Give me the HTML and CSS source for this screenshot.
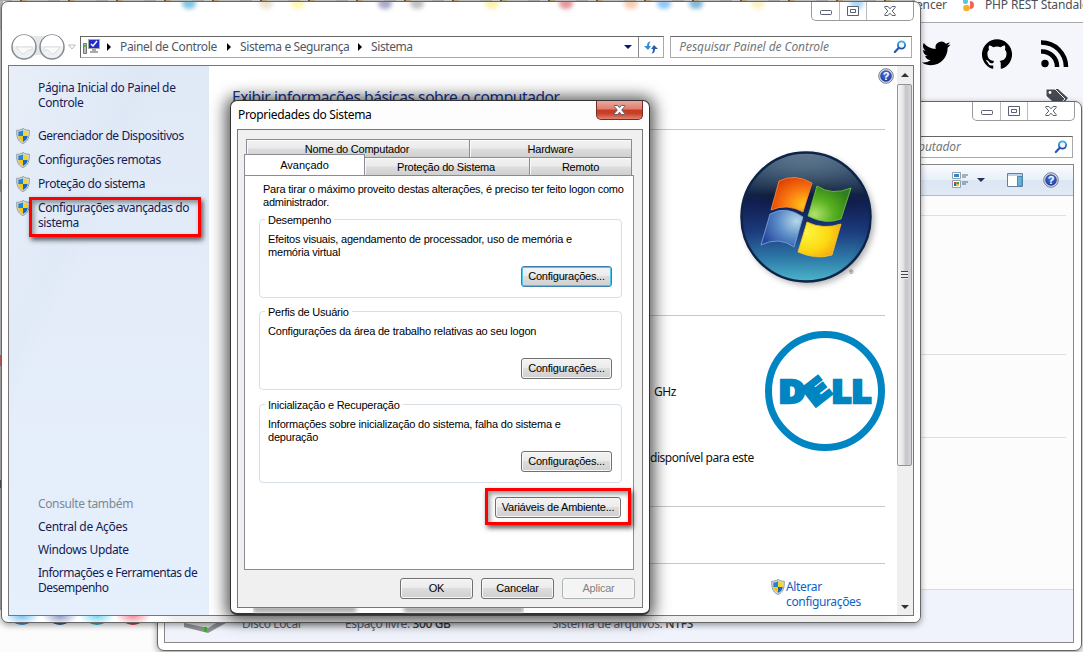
FILE: index.html
```html
<!DOCTYPE html>
<html lang="pt-BR">
<head>
<meta charset="utf-8">
<title>Propriedades do Sistema</title>
<link rel="stylesheet" href="styles.css">
</head>
<body>
<svg width="0" height="0" class="defs">
  <defs>
    <linearGradient id="lens" x1="0" y1="0" x2="0" y2="1"><stop offset="0" stop-color="#38b5e0"/><stop offset="1" stop-color="#1f4da8"/></linearGradient>
    <radialGradient id="helpfill" cx=".5" cy=".35" r=".7"><stop offset="0" stop-color="#4f7fe0"/><stop offset="1" stop-color="#14309a"/></radialGradient>
    <symbol id="shield" viewBox="0 0 14 16">
      <path d="M7 .5C5 1.8 3 2.3.7 2.3.5 8.500 1.500 13 7 15.600 12.500 13 13.500 8.500 13.300 2.300 11 2.300 9 1.800 7 .5z" fill="#d9dcdc" stroke="#8d9191" stroke-width=".9"/>
      <path d="M7 2.200C5.500 3 4 3.600 2.300 3.600V8H7z" fill="#2383d6"/><path d="M7 2.200C8.500 3 10 3.600 11.700 3.600V8H7z" fill="#f5d526"/>
      <path d="M2.300 8H7v6C4 12.600 2.500 10.500 2.300 8z" fill="#f7c614"/><path d="M11.700 8H7v6c3-1.400 4.500-3.500 4.700-6z" fill="#1668c4"/>
    </symbol>
    <symbol id="search" viewBox="0 0 14 14"><circle cx="8.500" cy="5" r="3.600" fill="#eef8fd" stroke="url(#lens)" stroke-width="1.800"/><path d="M5.800 7.800 1.800 12" stroke="#2858ae" stroke-width="2.200" stroke-linecap="round"/></symbol>
    <symbol id="help" viewBox="0 0 16 16"><circle cx="8" cy="8" r="7.300" fill="#d7dae2" stroke="#7b7f8c"/><circle cx="8" cy="8" r="5.800" fill="url(#helpfill)"/><text x="8" y="12.200" text-anchor="middle" class="qmark">?</text></symbol>
    <symbol id="min" viewBox="0 0 12 10"><rect x=".5" y="4.500" width="11" height="4" rx=".8" fill="#fff" stroke="#596071"/></symbol>
    <symbol id="max" viewBox="0 0 12 10"><path d="M.5.5h11v9H.5z" fill="#fff" stroke="#596071"/><path d="M3.500 3.500h5v3h-5z" fill="#fff" stroke="#596071"/></symbol>
    <symbol id="close" viewBox="0 0 12 10"><path d="M.8.5h3.200L6 2.800 8 .5h3.200v1L8.200 5l3 3.500v1H8L6 7.200 4 9.500H.8v-1l3-3.500-3-3.500z" fill="#fff" stroke="#596071"/></symbol>
  </defs>
</svg>

<div class="desktop">
  <div class="browser">
    <div class="bookmarks">
      <span class="bm-one">encer</span>
      <svg width="12" height="13" viewBox="0 0 12 13"><circle cx="2.500" cy="2.500" r="2.500" fill="#55c6d8"/><path d="M5 2a4 4 0 0 1 0 8z" fill="#f2645a" transform="translate(2 0)"/><circle cx="3.500" cy="9" r="3.300" fill="#f9ae2b"/></svg>
      <span>PHP REST Standalone</span>
    </div>
    <div class="socials">
      <svg width="30" height="26" viewBox="0 0 24 20"><path d="M23.600 2.400c-.8.400-1.700.6-2.700.8 1-.6 1.700-1.500 2-2.600-.9.500-1.900.9-3 1.100A4.700 4.700 0 0 0 11.800 6C7.900 5.800 4.500 4 2.200 1.100c-1.200 2.100-.6 4.900 1.500 6.300-.8 0-1.500-.2-2.100-.6 0 2.200 1.500 4.300 3.800 4.700-.7.200-1.400.2-2.100.1.600 1.900 2.300 3.200 4.400 3.300A9.500 9.500 0 0 1 .7 16.800c2.100 1.400 4.600 2.200 7.200 2.200 8.700 0 13.700-7.400 13.400-14.100.9-.7 1.700-1.500 2.300-2.500z"/></svg>
      <svg width="30" height="30" viewBox="0 0 24 24"><path d="M12 .3a12 12 0 0 0-3.800 23.400c.6.100.8-.3.800-.6v-2c-3.300.7-4-1.600-4-1.600-.6-1.400-1.400-1.800-1.400-1.800-1-.7.100-.7.100-.7 1.200 0 1.900 1.200 1.900 1.200 1 1.800 2.800 1.300 3.500 1 0-.8.400-1.300.7-1.600-2.700-.3-5.500-1.300-5.500-6 0-1.200.5-2.300 1.300-3.100-.2-.4-.6-1.600 0-3.200 0 0 1-.3 3.400 1.200a11.500 11.500 0 0 1 6 0c2.300-1.500 3.300-1.200 3.300-1.200.6 1.600.2 2.800 0 3.200.9.800 1.300 1.900 1.300 3.200 0 4.600-2.800 5.600-5.500 5.900.5.400.9 1 .9 2.200v3.300c0 .3.100.7.800.6A12 12 0 0 0 12 .3"/></svg>
      <svg width="28" height="28" viewBox="0 0 28 28" fill="none" stroke="#000" stroke-width="4.500"><circle cx="4" cy="23.500" r="3.700" fill="#000" stroke="none"/><path d="M0 11.500A15 15 0 0 1 16 27M0 2.500A24.500 24.500 0 0 1 25 27"/></svg>
    </div>
    <svg class="tags" width="24" height="18" viewBox="0 0 24 18"><path d="M10 1h3l10 9-6 7z" fill="#454a52"/><path d="M1 1h9l10 10-8 7L1 8z" fill="#454a52" stroke="#f8f8fc"/><circle cx="5" cy="4.500" r="1.400" fill="#fff"/></svg>
  </div>
  <i class="dot d1"></i><i class="dot d2"></i><i class="dot d3"></i><i class="dot d4"></i>

  <section class="window explorer">
    <div class="caption"><b><svg width="12" height="10"><use href="#min"/></svg></b><b><svg width="12" height="10"><use href="#max"/></svg></b><b><svg width="12" height="10"><use href="#close"/></svg></b></div>
    <div class="nav"><div class="search"><em>Pesquisar Computador</em><svg width="14" height="14"><use href="#search"/></svg></div></div>
    <div class="frame">
      <div class="toolbar">
        <svg width="17" height="16" viewBox="0 0 17 16"><path d="M.5.5h8v6h-8zM.5 8.500h8v7h-8z" fill="#fff" stroke="#8fa0b5"/><path d="M2 2h5v3H2z" fill="#3983bd"/><path d="M2 10h2.500v2H2z" fill="#e33"/><path d="M4.500 10H7v2H4.500z" fill="#3a3"/><path d="M2 12h2.500v2H2z" fill="#36b"/><path d="M4.500 12H7v2H4.500z" fill="#eb2"/><path d="M10 3h6M10 5h4M10 10h6M10 12h4" stroke="#5f6b7a"/></svg>
        <svg class="tool-arrow" width="8" height="4"><path d="M0 0h8L4 4z" fill="#1d3358"/></svg>
        <svg width="16" height="14" viewBox="0 0 16 14"><path d="M.5.5h15v13H.5z" fill="#fff" stroke="#66809c"/><path d="M1 1h14v2H1z" fill="#b9d4ea"/><path d="M10.500 3.500h4.500v9.500h-4.500z" fill="#63b5dc" stroke="#4a89ae"/></svg>
        <svg width="16" height="16"><use href="#help"/></svg>
      </div>
      <div class="files"><hr class="first"><hr><hr></div>
      <div class="details">
        <svg width="42" height="27" viewBox="0 0 42 27"><path d="M0 16 10 10h32v6L24 26 0 20z" fill="#8e9092"/><path d="M0 16 10 10h32L24 21z" fill="#d9dadb"/><path d="M20 20v5h3v-5z" fill="#3cb02e"/></svg>
        <span>Disco Local</span><span class="lb2">Espaço livre: <strong>300 GB</strong></span><span class="lb3">Sistema de arquivos: <strong>NTFS</strong></span>
      </div>
    </div>
  </section>

  <section class="window system">
    <div class="reflections"><i class="r1"></i><i class="r2"></i><i class="r3"></i><i class="r4"></i><i class="r5"></i><i class="r6"></i><i class="r7"></i><i class="r8"></i><i class="r9"></i><i class="r10"></i><i class="r11"></i><i class="r12"></i></div>
    <div class="caption"><b><svg width="12" height="10"><use href="#min"/></svg></b><b><svg width="12" height="10"><use href="#max"/></svg></b><b><svg width="12" height="10"><use href="#close"/></svg></b></div>
    <div class="nav">
      <svg class="travel" width="66" height="28" viewBox="0 0 66 28"><path d="M14 1.500Q28 5 42 1.500V26Q28 18 14 26z" fill="#e3e5e7"/><g fill="#eef1f3" stroke="#858a90" stroke-width="1.500"><circle cx="14" cy="14" r="12"/><circle cx="42" cy="14" r="12"/></g><path d="M3 13a11 11 0 0 1 22 0zM31 13a11 11 0 0 1 22 0z" fill="#fff"/><path d="M6 14h16v3h-4l-4 4-3-1zM50 14H34v3h4l4 4 3-1z" fill="#fafafa" stroke="#d4d7d9" stroke-width=".8"/><path d="M58.500 12h7L62 16z" fill="#fff" stroke="#bbb"/></svg>
      <div class="address">
        <svg width="18" height="16" viewBox="0 0 18 16"><path d="M5.500.5h11v9h-11z" fill="#1f2ec9" stroke="#aaa9a2"/><path d="M8 5l2 2 4-5" stroke="#fff" stroke-width="1.500" fill="none"/><path d="M9 10h4v2h2v2H7v-2h2z" fill="#aaa"/><path d="M.5 4.500h3v10h-3z" fill="#bbb" stroke="#777"/><path d="M1 6h2v2H1z" fill="#3c3"/></svg>
        <i class="chev"></i><span class="a1">Painel de Controle</span><i class="chev"></i><span class="a2">Sistema e Segurança</span><i class="chev"></i><span class="a3">Sistema</span>
        <i class="drop"></i>
        <div class="refresh"><svg width="14" height="13" viewBox="0 0 14 13"><path d="M6.500.5Q3 .5 3 5H0l4 4 3-4H5Q5 2 6.500.5z" fill="#2f8ed8"/><path d="M7.500 12.500Q11 12.500 11 8h3l-4-4-3 4h2q0 3-1.500 4.500z" fill="#2b5dab"/></svg></div>
      </div>
      <div class="search"><em>Pesquisar Painel de Controle</em><svg width="14" height="14"><use href="#search"/></svg></div>
    </div>
    <div class="frame panel">
      <aside class="side">
        <p class="home">Página Inicial do Painel de Controle</p>
        <ul class="tasks">
          <li><svg width="14" height="16"><use href="#shield"/></svg><span class="t1">Gerenciador de Dispositivos</span></li>
          <li><svg width="14" height="16"><use href="#shield"/></svg><span>Configurações remotas</span></li>
          <li><svg width="14" height="16"><use href="#shield"/></svg><span>Proteção do sistema</span></li>
          <li><svg width="14" height="16"><use href="#shield"/></svg><span>Configurações avançadas do<br>sistema</span></li>
        </ul>
        <div class="also">
          <p class="muted">Consulte também</p><p class="s1">Central de Ações</p><p class="s2">Windows Update</p><p class="s3">Informações e Ferramentas de<br>Desempenho</p>
        </div>
        <div class="mark mark-side"></div>
      </aside>
      <main class="info">
        <header><h1>Exibir informações básicas sobre o computador</h1><svg width="16" height="16"><use href="#help"/></svg></header>
        <div class="block edition">
          <svg width="150" height="150" viewBox="0 0 150 150">
            <defs>
              <linearGradient id="orb" x1="0" y1="0" x2="0" y2="1"><stop offset="0" stop-color="#8fa6b4"/><stop offset=".1" stop-color="#64808f"/><stop offset=".33" stop-color="#101f3c"/><stop offset=".38" stop-color="#101c4c"/><stop offset=".62" stop-color="#1c3d7e"/><stop offset=".82" stop-color="#2e7aa8"/><stop offset="1" stop-color="#4cb5cb"/></linearGradient>
              <radialGradient id="edge" cx=".5" cy=".62" r=".6"><stop offset=".65" stop-color="#12306e" stop-opacity="0"/><stop offset="1" stop-color="#0e2555" stop-opacity=".35"/></radialGradient>
              <radialGradient id="fr" cx=".8" cy=".8" r=".9"><stop offset="0" stop-color="#ffc61a"/><stop offset=".5" stop-color="#f87a10"/><stop offset="1" stop-color="#e03c04"/></radialGradient>
              <radialGradient id="fg" cx=".15" cy=".8" r=".9"><stop offset="0" stop-color="#b0e36a"/><stop offset=".5" stop-color="#57b01f"/><stop offset="1" stop-color="#2f7f1a"/></radialGradient>
              <radialGradient id="fb" cx=".85" cy=".3" r=".9"><stop offset="0" stop-color="#b5d8e8"/><stop offset=".5" stop-color="#5c8cc8"/><stop offset="1" stop-color="#28489e"/></radialGradient>
              <radialGradient id="fy" cx=".2" cy=".3" r=".95"><stop offset="0" stop-color="#fdf640"/><stop offset=".55" stop-color="#fcd913"/><stop offset="1" stop-color="#f29a10"/></radialGradient>
              <filter id="soft"><feGaussianBlur stdDeviation="3"/></filter>
            </defs>
            <circle cx="71" cy="71" r="65" fill="#777" filter="url(#soft)" opacity=".6"/>
            <circle cx="68" cy="68" r="64.500" fill="url(#orb)" stroke="#0e2347" stroke-width="2.500"/>
            <circle cx="68" cy="68" r="64" fill="url(#edge)"/>
            <path transform="translate(-1 1)" d="M42 31Q58 23 75 33L66 62Q50 53 34 60z" fill="url(#fr)" stroke="#ff8b3c" stroke-width=".8"/>
            <path transform="translate(0 1)" d="M79 36Q94 46 113 38L103 69Q87 75 70 66z" fill="url(#fg)" stroke="#79c84a" stroke-width=".8"/>
            <path d="M32 65Q48 56 65 68L56 98Q41 87 23 96z" fill="url(#fb)" stroke="#7fa9dc" stroke-width=".8"/>
            <path transform="translate(0 2)" d="M69 71Q85 79 103 73L94 104Q78 109 60 101z" fill="url(#fy)" stroke="#fbc82c" stroke-width=".8"/>
            <text x="111" y="125" class="reg">®</text>
          </svg>
        </div>
        <div class="block hardware">
          <span class="ghz">GHz</span>
          <svg class="dell" width="120" height="120" viewBox="0 0 120 120"><circle cx="60" cy="60" r="56.500" fill="none" stroke="#0085c3" stroke-width="7"/><g class="delltext"><text x="13.500" y="71.500" textLength="27" lengthAdjust="spacingAndGlyphs">D</text><text x="38.500" y="71.500" textLength="25" lengthAdjust="spacingAndGlyphs" transform="rotate(-38 52 60)">E</text><text x="66.500" y="71.500" textLength="40" lengthAdjust="spacingAndGlyphs">LL</text></g></svg>
          <span class="touch">disponível para este</span>
        </div>
        <div class="block empty"></div>
        <div class="block change"><svg width="14" height="16"><use href="#shield"/></svg><a>Alterar<br>configurações</a></div>
      </main>
      <div class="scroll"><i class="up"></i><div class="thumb"><i></i></div><i class="down"></i></div>
    </div>
    <div class="footglass"></div>
  </section>

  <section class="dialog">
    <div class="title"><h2>Propriedades do Sistema</h2><b><svg width="13" height="10" viewBox="0 0 12 10"><use href="#close"/></svg></b></div>
    <div class="ghosts"><i></i><i></i></div>
    <div class="body">
      <div class="tabs top"><span class="w1"><em>Nome do Computador</em></span><span><em>Hardware</em></span></div>
      <div class="tabs low"><span class="active"><em>Avançado</em></span><span class="w2"><em>Proteção do Sistema</em></span><span class="w3"><em>Remoto</em></span></div>
      <div class="sheet">
        <p class="intro">Para tirar o máximo proveito destas alterações, é preciso ter feito logon como<br>administrador.</p>
        <fieldset><legend>Desempenho</legend><p>Efeitos visuais, agendamento de processador, uso de memória e<br>memória virtual</p><button class="focus">Configurações...</button></fieldset>
        <fieldset><legend>Perfis de Usuário</legend><p>Configurações da área de trabalho relativas ao seu logon</p><button>Configurações...</button></fieldset>
        <fieldset><legend>Inicialização e Recuperação</legend><p>Informações sobre inicialização do sistema, falha do sistema e<br>depuração</p><button>Configurações...</button></fieldset>
        <div class="env"><button>Variáveis de Ambiente...</button><div class="mark mark-env"></div></div>
      </div>
      <div class="actions"><button>OK</button><button>Cancelar</button><button class="off">Aplicar</button></div>
    </div>
  </section>
</div>
</body>
</html>
```
FILE: styles.css
```css
* { box-sizing: border-box; }
body { margin: 0; overflow: hidden; }
h1, h2, p, ul, fieldset, hr { margin: 0; padding: 0; border: 0; font-weight: normal; }
svg { display: block; flex: none; }
.defs { position: absolute; }
.desktop { position: relative; width: 1083px; height: 652px; overflow: hidden; background: #fcfcfc; font: 12px/15px "Noto Sans", "Open Sans", sans-serif; letter-spacing: -.4px; color: #151c55; }
.desktop::before { content: ""; position: absolute; left: 0; top: 0; width: 3px; height: 610px; background: linear-gradient(#bbb 0 30px, #d5d5d5 30px 180px, #999 180px 192px, #ccc 192px 355px, #c66 355px 366px, #bbb 366px 480px, #556 480px 488px, #aaa 488px); }
.desktop::after { content: ""; position: absolute; left: 0; top: 0; width: 915px; height: 1px; background: repeating-linear-gradient(90deg, #aaa 0 12px, #c7c7c7 12px 20px, #555 20px 22px, #bba177 22px 27px, #bbb 27px 48px); }
.browser { position: absolute; left: 915px; top: 0; width: 168px; height: 105px; background: #f5f5fc; }
.bookmarks { display: flex; height: 23px; padding-left: 1px; background: #fff; border-bottom: 1px solid #aaa; line-height: 10px; color: #4b5058; white-space: nowrap; letter-spacing: -.15px; }
.bookmarks svg { margin: -1px 10px 0 18px; }
.bm-one { width: 29px; }
.socials { display: flex; align-items: center; height: 61px; padding-left: 6px; }
.socials svg:nth-child(2) { margin-left: 31px; }
.socials svg:nth-child(3) { margin-left: 29px; }
.tags { margin: 4px 0 0 130px; }
.dot { position: absolute; top: 595px; width: 30px; height: 30px; border-radius: 50%; }
.d1 { left: 7px; background: #2b93d8; } .d2 { left: 45px; background: #3b5998; } .d3 { left: 82px; background: #25b4dc; } .d4 { left: 118px; background: #d13549; }

.window { position: absolute; border: 1px solid #666; border-radius: 7px; background: #fff; box-shadow: 0 2px 6px rgba(0,0,0,.4); }
.explorer { left: 157px; top: 101px; width: 925px; height: 550px; }
.system { left: 1px; top: 1px; width: 920px; height: 622px; display: flex; flex-direction: column; }
.caption { display: flex; width: 103px; height: 19px; margin: 0 6px 0 auto; border: 1px solid #999; border-top: 0; border-radius: 0 0 5px 5px; flex: none; position: relative; }
.explorer .caption { margin-bottom: 0; }
.caption b { display: flex; align-items: center; justify-content: center; width: 28px; border-right: 1px solid #bbb; }
.caption b:nth-child(2) { width: 27px; }
.caption b:last-child { flex: 1; border: 0; }
.nav { display: flex; flex: none; padding: 15px 8px 0; height: 44px; }
.explorer .nav { justify-content: flex-end; height: 43px; }
.search { display: flex; align-items: center; width: 242px; height: 22px; padding: 0 4px 0 8px; border: 1px solid #aaa; border-top-color: #666; background: #fff; }
.search em { flex: 1; margin-top: -1px; color: #74767b; white-space: nowrap; letter-spacing: -.08px; }
.explorer .frame { margin: 0 7px 0 6px; height: 479px; border: 1px solid #888; background: #fcfcfc; display: flex; flex-direction: column; }
.toolbar { display: flex; justify-content: flex-end; align-items: center; height: 31px; padding-right: 14px; flex: none; background: linear-gradient(#fafcfe, #e7eff8 50%, #dce7f4 51%, #e0e9f5); border-bottom: 1px solid #a7bdd8; }
.toolbar svg:nth-child(3) { margin: 0 20px 0 22px; }
.tool-arrow { margin-left: 8px; }
.files { flex: 1; padding-top: 19px; }
.files hr { height: 1px; margin: 0 7px 82px 0; background: #dfdfdf; }
.files .first { margin-bottom: 138px; }
.files hr:last-child { margin-bottom: 0; }
.details { display: flex; height: 53px; border-top: 1px solid #ccddef; background: #f0f3fb; padding: 17px 0 0 19px; color: #59647a; white-space: nowrap; flex: none; line-height: 33px; }
.details > span:nth-of-type(1) { margin-left: 16px; width: 103px; }
.details .lb2 { width: 207px; letter-spacing: -.38px; } .details strong { color: #33394a; font-weight: 500; }
.details .lb3 { letter-spacing: -.3px; }

.reflections { position: absolute; inset: 0 0 auto; height: 16px; overflow: hidden; border-radius: 7px 7px 0 0; }
.reflections i { position: absolute; top: -4px; width: 14px; height: 11px; border-radius: 50%; filter: blur(2px); opacity: .5; }
.r1 { left: 180px; background: #058cc7; } .r2 { left: 257px; background: #d9c9a4; } .r3 { left: 289px; background: #fff06a; } .r4 { left: 376px; background: #55559a; } .r5 { left: 408px; background: #888; } .r6 { left: 483px; background: #f9e65c; } .r7 { left: 557px; background: #ca2e38; } .r8 { left: 622px; background: #f39a67; } .r9 { left: 655px; background: #2793f2; } .r10 { left: 687px; background: #0873b4; } .r11 { left: 749px; background: #f9e688; } .r12 { left: 848px; background: #5ab2f2; }
.travel { margin: -3px 3px 0 0; }
.address { display: flex; align-items: center; width: 585px; height: 22px; margin-right: 6px; margin-left: 1px; padding-left: 2px; border: 1px solid #aaa; border-top-color: #666; border-left-color: #666; color: #505765; white-space: nowrap; }
.address span { margin-top: -1px; }
.chev { width: 0; height: 0; border: 4px solid transparent; border-left: 4px solid #000; border-right: 0; margin: 0 9px 0 9px; }
.address svg + .chev { margin-left: 6px; }
.a1 { width: 98px; letter-spacing: -.35px; } .a2 { width: 109px; }
.address .drop { margin-left: auto; border: 4px solid transparent; border-top-color: #0c1970; border-bottom: 0; }
.refresh { margin-left: 6px; width: 25px; height: 20px; display: flex; align-items: center; justify-content: center; border-left: 1px solid #888; }
.panel { display: flex; flex: none; margin: 0 7px 0 6px; width: 906px; height: 551px; border: 1px solid #777; overflow: hidden; background: #fff; }
.footglass { flex: 1; border-radius: 0 0 6px 6px; background: radial-gradient(ellipse 18px 9px at 20px 0, #7cc4f0, transparent), radial-gradient(ellipse 18px 9px at 58px 0, #8f9fca, transparent), radial-gradient(ellipse 18px 9px at 95px 0, #77d8f0, transparent), radial-gradient(ellipse 18px 9px at 131px 0, #f0909a, transparent), linear-gradient(90deg, transparent 155px, #eee 175px 880px, #fff 915px); }
.side { position: relative; width: 200px; flex: none; display: flex; flex-direction: column; background: linear-gradient(115deg, rgba(255,255,255,.25), rgba(215,226,242,.2) 30%, transparent 36%), linear-gradient(#e0e9f6, #e3ecf8 45%, #e6f0fd); }
.home { padding: 14px 20px 0 29px; letter-spacing: -.37px; }
.tasks { list-style: none; margin-top: 18px; }
.tasks li { display: flex; padding-left: 7px; gap: 8px; margin-bottom: 9px; white-space: nowrap; }
.tasks svg { margin-bottom: -1px; }
.t1 { letter-spacing: -.44px; } .s3 { letter-spacing: -.5px; } .s1 { letter-spacing: -.3px; }
.also { margin-top: auto; padding: 0 0 20px 29px; white-space: nowrap; }
.also p { margin-bottom: 8px; } .also p:last-child { margin: 0; } .also .muted { color: #808794; }
.also .muted, .also .s2 { letter-spacing: -.36px; }
.mark { position: absolute; border: 3px solid #f00; box-shadow: 2px 3px 5px rgba(0,0,0,.65), inset 2px 3px 5px rgba(0,0,0,.4); }
.mark-side { left: 20px; top: 131px; width: 172px; height: 40px; }
.info { flex: 1; min-width: 0; display: flex; flex-direction: column; padding: 0 12px 0 23px; }
.info header { display: flex; justify-content: space-between; height: 63px; margin-right: -9px; padding-top: 2px; }
.info h1 { margin-top: 19px; font-size: 15.500px; line-height: 20px; color: #14379b; white-space: nowrap; }
.block { border-top: 1px solid #c8c8c8; color: #111; flex: none; }
.edition { height: 186px; } .edition svg { margin: 19px 0 0 506px; }
.hardware { height: 191px; display: grid; grid-template-columns: 533px 120px; grid-template-rows: 134px 20px; }
.ghz { padding: 68px 0 0 422px; }
.dell { margin-top: 15px; }
.touch { padding-left: 418px; white-space: nowrap; letter-spacing: -.45px; }
.empty { height: 57px; }
.change { display: flex; padding: 15px 0 0 539px; gap: 1px; } .change a { color: #0b63ca; letter-spacing: -.35px; }
.scroll { width: 16px; padding-right: 1px; flex: none; background: #efefef; display: flex; flex-direction: column; align-items: center; }
.up { border: 4px solid transparent; border-top: 0; border-bottom: 4px solid #333; margin: 7px 0; }
.thumb { width: 15px; height: 382px; border: 1px solid #939393; border-radius: 2px; background: linear-gradient(90deg, #f6f6f6, #e4e4e6 40%, #c6c6ca 60%, #d5d5d8); display: flex; align-items: center; justify-content: center; }
.thumb i { width: 7px; height: 8px; background: repeating-linear-gradient(#444 0 1px, #eee 1px 3px); }
.down { border: 4px solid transparent; border-bottom: 0; border-top-color: #333; margin: auto 0 6px; }

.dialog { position: absolute; left: 230px; top: 100px; width: 420px; height: 515px; border: 2px solid #333; border-width: 1px 1px 2px 1px; border-radius: 7px; background: #fdfdfd; box-shadow: 0 1px 16px 4px rgba(0,0,0,.68); color: #000; font: 11px/13px "Liberation Sans", Arial, sans-serif; letter-spacing: -.22px; }
.title { display: flex; justify-content: space-between; height: 28px; padding: 0 6px 0 7px; }
.title h2 { font: 12px/28px "Noto Sans", sans-serif; letter-spacing: -.32px; white-space: nowrap; }
.title b { display: flex; align-items: center; justify-content: center; width: 47px; height: 19px; border: 1px solid #762b23; border-top: 0; border-radius: 0 0 5px 5px; background: linear-gradient(#eba99d, #df7d6d 45%, #c73a25 50%, #c84128 70%, #e18370); }
.ghosts { position: absolute; left: 22px; bottom: -1px; display: flex; gap: 48px; overflow: hidden; height: 7px; }
.ghosts i { width: 103px; height: 5px; background: #999; filter: blur(2px); }
.ghosts i + i { width: 120px; }
.body { width: 406px; height: 479px; margin-left: 6px; padding: 9px 6px 0; border: 1px solid #777; background: #f0f0f0; position: relative; }
.tabs { display: flex; margin: 0 4px 0 2px; height: 18px; }
.tabs em { font-style: normal; }
.tabs span { display: flex; align-items: center; justify-content: center; height: 18px; padding-top: 1px; border: 1px solid #898c95; border-bottom: 0; background: linear-gradient(#f2f2f2, #ebebeb 48%, #ddd 52%, #d0d0d0); box-shadow: inset 1px 1px #fafafa; flex: 1; white-space: nowrap; }
.tabs .w1 { flex: 0 0 223px; border-right: 0; padding-right: 2px; }
.tabs .active { flex: 0 0 121px; height: 21px; margin: -3px 0 0 -2px; background: #fff; box-shadow: none; z-index: 2; padding: 0; letter-spacing: 0; }
.tabs .w2 { flex: 0 0 164px; border-left: 0; border-right: 0; padding-right: 2px; }
.sheet { height: 395px; border: 1px solid #898c95; background: #fff; padding: 7px 12px 0 14px; position: relative; width: 390px; z-index: 1; }
.intro { padding-left: 4px; white-space: nowrap; margin-bottom: 10px; }
fieldset { position: relative; height: 79px; width: 363px; border: 1px solid #d5dfe5; border-radius: 4px; margin-bottom: 13px; padding: 13px 9px 0 8px; min-width: 0; }
fieldset:nth-of-type(3) { margin-top: 14px; }
legend { position: absolute; top: -6px; left: 5px; padding: 0 3px; background: #fff; white-space: nowrap; line-height: 12px; }
fieldset p { white-space: nowrap; height: 33px; letter-spacing: -.2px; }
button { display: block; height: 21px; padding: 0; border: 1px solid #707070; border-radius: 3px; background: linear-gradient(#f3f3f3, #ebebeb 49%, #ddd 50%, #cfcfcf); box-shadow: inset 0 0 0 1px #f8f8f8; color: #000; font: 11px/19px "Liberation Sans", Arial, sans-serif; letter-spacing: -.22px; white-space: nowrap; }
fieldset button { width: 91px; margin: 0 0 0 auto; }
.focus { border-color: #3c7fb1; box-shadow: inset 0 0 0 1px #48c8f0; }
.env { position: relative; display: flex; justify-content: flex-end; }
.env button { width: 126px; margin-top: 1px; }
.mark-env { right: -10px; top: -8px; width: 146px; height: 37px; }
.actions { display: flex; justify-content: flex-end; gap: 8px; margin: 8px 0 0; padding-right: 1px; }
.actions button { width: 73px; }
.actions .off { color: #838383; border-color: #adb2b5; background: #f4f4f4; }
.qmark { font: bold 11px "Liberation Sans", sans-serif; letter-spacing: 0; fill: #fff; }
.reg { font: 6px "Liberation Sans", sans-serif; fill: #333; }
.delltext { font: 800 32px "Open Sans", "Liberation Sans", sans-serif; letter-spacing: 0; fill: #0085c3; stroke: #0085c3; stroke-width: 2.500px; }
```
